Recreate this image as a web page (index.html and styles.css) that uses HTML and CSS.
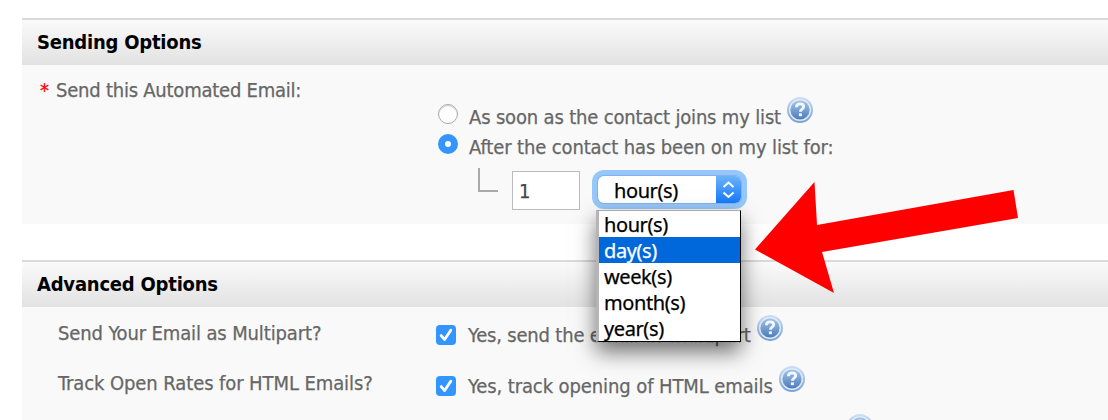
FILE: index.html
```html
<!DOCTYPE html>
<html lang="en">
<head>
  <meta charset="UTF-8" />
  <title>Email Options</title>
  <link rel="stylesheet" href="styles.css">
</head>
<body>
  <!-- shared icons -->
  <svg class="symbols" width="0" height="0">
    <defs>
      <linearGradient id="help-fill" x1="0" y1="0" x2="0" y2="1">
        <stop offset="0" stop-color="#a3c4e8"/>
        <stop offset="1" stop-color="#4c7cbb"/>
      </linearGradient>
      <linearGradient id="help-rim" x1="0" y1="0" x2="0" y2="1">
        <stop offset="0" stop-color="#c9def3"/>
        <stop offset="1" stop-color="#7ba3d3"/>
      </linearGradient>
    </defs>
    <symbol id="help" viewBox="0 0 26 26">
      <circle cx="13" cy="13" r="12" fill="#dfeaf7" stroke="url(#help-rim)" stroke-width="2"/>
      <circle cx="13" cy="13" r="9.6" fill="url(#help-fill)"/>
      <path d="M9.4 10.2c.1-2.2 1.6-3.3 3.7-3.3s3.6 1.1 3.6 2.9c0 2.3-3.3 2.5-3.3 5" fill="none" stroke="#f3f8fe" stroke-width="2.8"/>
      <rect x="11.9" y="16.400" width="3" height="2.800" fill="#f3f8fe"/>
    </symbol>
    <symbol id="check" viewBox="0 0 20 20">
      <path d="M5.2 10.6l3.400 4L14.8 5.2" fill="none" stroke="#fff" stroke-width="2.8" stroke-linecap="round" stroke-linejoin="round"/>
    </symbol>
  </svg>

  <main class="page">
    <section class="panel sending">
      <h2>Sending Options</h2>
      <div class="row">
        <div class="label"><span class="required">*</span><span class="send-label">Send this Automated Email:</span></div>
        <div class="choices">
          <div class="choice">
            <span class="radio"></span>
            <span class="text soon">As soon as the contact joins my list</span>
            <svg class="help"><use href="#help"/></svg>
          </div>
          <div class="choice">
            <span class="radio checked"></span>
            <span class="text after">After the contact has been on my list for:</span>
          </div>
          <div class="delay">
            <span class="branch"></span>
            <span class="amount">1</span>
            <div class="select">
              <span class="select-value">hour(s)</span>
              <span class="select-button">
                <svg width="25" height="28" viewBox="0 0 25 28"><path d="M7.500 11l5-4.500 5 4.500M7.500 16.500l5 4.500 5-4.500" fill="none" stroke="#fff" stroke-width="2"/></svg>
              </span>
              <ul class="menu">
                <li>hour(s)</li>
                <li class="active">day(s)</li>
                <li>week(s)</li>
                <li>month(s)</li>
                <li>year(s)</li>
              </ul>
            </div>
          </div>
        </div>
      </div>
    </section>

    <section class="panel advanced">
      <h2>Advanced Options</h2>
      <div class="row option">
        <div class="label"><span class="multi-label">Send Your Email as Multipart?</span></div>
        <div class="choice">
          <span class="checkbox"><svg><use href="#check"/></svg></span>
          <span class="text multi">Yes, send the email as multipart</span>
          <svg class="help"><use href="#help"/></svg>
        </div>
      </div>
      <div class="row option track-row">
        <div class="label"><span class="track-label">Track Open Rates for HTML Emails?</span></div>
        <div class="choice">
          <span class="checkbox"><svg><use href="#check"/></svg></span>
          <span class="text track">Yes, track opening of HTML emails</span>
          <svg class="help"><use href="#help"/></svg>
        </div>
      </div>
      <div class="row next">
        <svg class="help"><use href="#help"/></svg>
      </div>
    </section>
  </main>

  <svg class="arrow" width="264" height="112" viewBox="0 0 264 112">
    <polygon points="0,67.500 59.500,0 62,43 258.500,8 263,36 67,70 79,111" fill="#f00"/>
  </svg>
</body>
</html>
```
FILE: styles.css
```css
:root {
  --text: #666;
  --panel: #f9f9f9;
  --blue: #3395ff;
}

* {
  margin: 0;
  padding: 0;
  box-sizing: border-box;
}

body {
  position: relative;
  height: 420px;
  overflow: hidden;
  background: #fff;
  color: var(--text);
  font-family: "DejaVu Sans Condensed", "DejaVu Sans", sans-serif;
  font-stretch: condensed;
  font-size: 20px;
  line-height: 26px;
  white-space: nowrap;
  -webkit-text-stroke: 0.25px;
}

.symbols {
  position: absolute;
}

.page {
  padding: 18px 0 0 22px;
}

.panel {
  background: var(--panel);
}

.sending {
  height: 206px;
  margin-bottom: 36px;
}

.advanced {
  height: 170px;
}

h2 {
  height: 47px;
  padding: 9px 15px 0;
  border-top: 2px solid #dadada;
  background: linear-gradient(#fafafa, #e2e2e2);
  color: #000;
  font-size: 20px;
  line-height: 26px;
  letter-spacing: -0.22px;
  -webkit-text-stroke: 0;
}

.row {
  display: grid;
  grid-template-columns: 416px 1fr;
}

.label {
  display: flex;
  padding: 12px 0 0 18px;
}

.required {
  width: 16px;
  color: #f00;
}

.send-label {
  letter-spacing: -0.23px;
}

.multi-label {
  letter-spacing: -0.13px;
}

.track-label {
  letter-spacing: -0.09px;
}

.choices {
  padding-top: 32px;
}

.choice {
  display: flex;
  height: 30px;
}

.text {
  padding-top: 7px;
}

.soon {
  letter-spacing: -0.17px;
}

.after {
  letter-spacing: -0.13px;
}

.multi {
  letter-spacing: -0.19px;
}

.track {
  letter-spacing: -0.1px;
}

.help {
  width: 26px;
  height: 26px;
  margin-left: 6px;
}

.radio {
  flex: none;
  width: 20px;
  height: 20px;
  margin: 7px 11px 0 0;
  border: 1px solid #aaa;
  border-radius: 50%;
  background: #fff;
  box-shadow: inset 0 1px 1px #ccc;
}

.radio.checked {
  border: 7px solid var(--blue);
  box-shadow: none;
}

.delay {
  display: flex;
  padding-top: 13px;
}

.branch {
  width: 20px;
  height: 24px;
  margin: -2px 14px 0 40px;
  border-left: 2px solid #aaa;
  border-bottom: 2px solid #aaa;
}

.amount {
  width: 68px;
  height: 39px;
  margin-top: 1px;
  padding: 6px 0 0 6px;
  border: 1px solid #bbb;
  background: #fff;
  color: #444;
}

.select {
  position: relative;
  display: flex;
  justify-content: space-between;
  width: 143px;
  height: 27px;
  margin: 6px 0 0 18px;
  border-radius: 6px;
  background: #fff;
  box-shadow: 0 0 0 1px #7eb4ee, 0 0 0 6px #97c7fa;
  color: #000;
  font-family: "Noto Sans", sans-serif;
  font-stretch: normal;
  letter-spacing: -0.4px;
}

.select-value {
  padding-left: 16px;
  line-height: 29px;
}

.select-button {
  width: 25px;
  height: 27px;
  border-radius: 0 6px 6px 0;
  background: linear-gradient(#6bb3fa, #1679f8);
}

.menu {
  position: absolute;
  top: 34px;
  left: -2px;
  width: 145px;
  height: 132px;
  border: 1px solid #000;
  border-top-color: #aaa;
  border-left: 3px solid #b5b5b5;
  background: #fff;
  box-shadow: 0 10px 20px rgba(0, 0, 0, 0.55);
  list-style: none;
}

.menu li {
  height: 26px;
  padding-left: 5px;
  line-height: 27px;
}

.menu .active {
  background: #0068da;
  color: #fff;
}

.option {
  height: 51px;
}

.option .label {
  padding: 13px 0 0 36px;
}

.track-row .label {
  padding-top: 12px;
}

.option .choice {
  padding-top: 8px;
}

.checkbox {
  flex: none;
  width: 20px;
  height: 20px;
  margin: 10px 12px 0 -2px;
  border-radius: 4px;
  background: var(--blue);
}

.checkbox svg {
  display: block;
  width: 20px;
  height: 20px;
}

.next {
  padding-left: 819px;
  padding-top: 5px;
}

.arrow {
  position: absolute;
  top: 182px;
  left: 755px;
}
```
